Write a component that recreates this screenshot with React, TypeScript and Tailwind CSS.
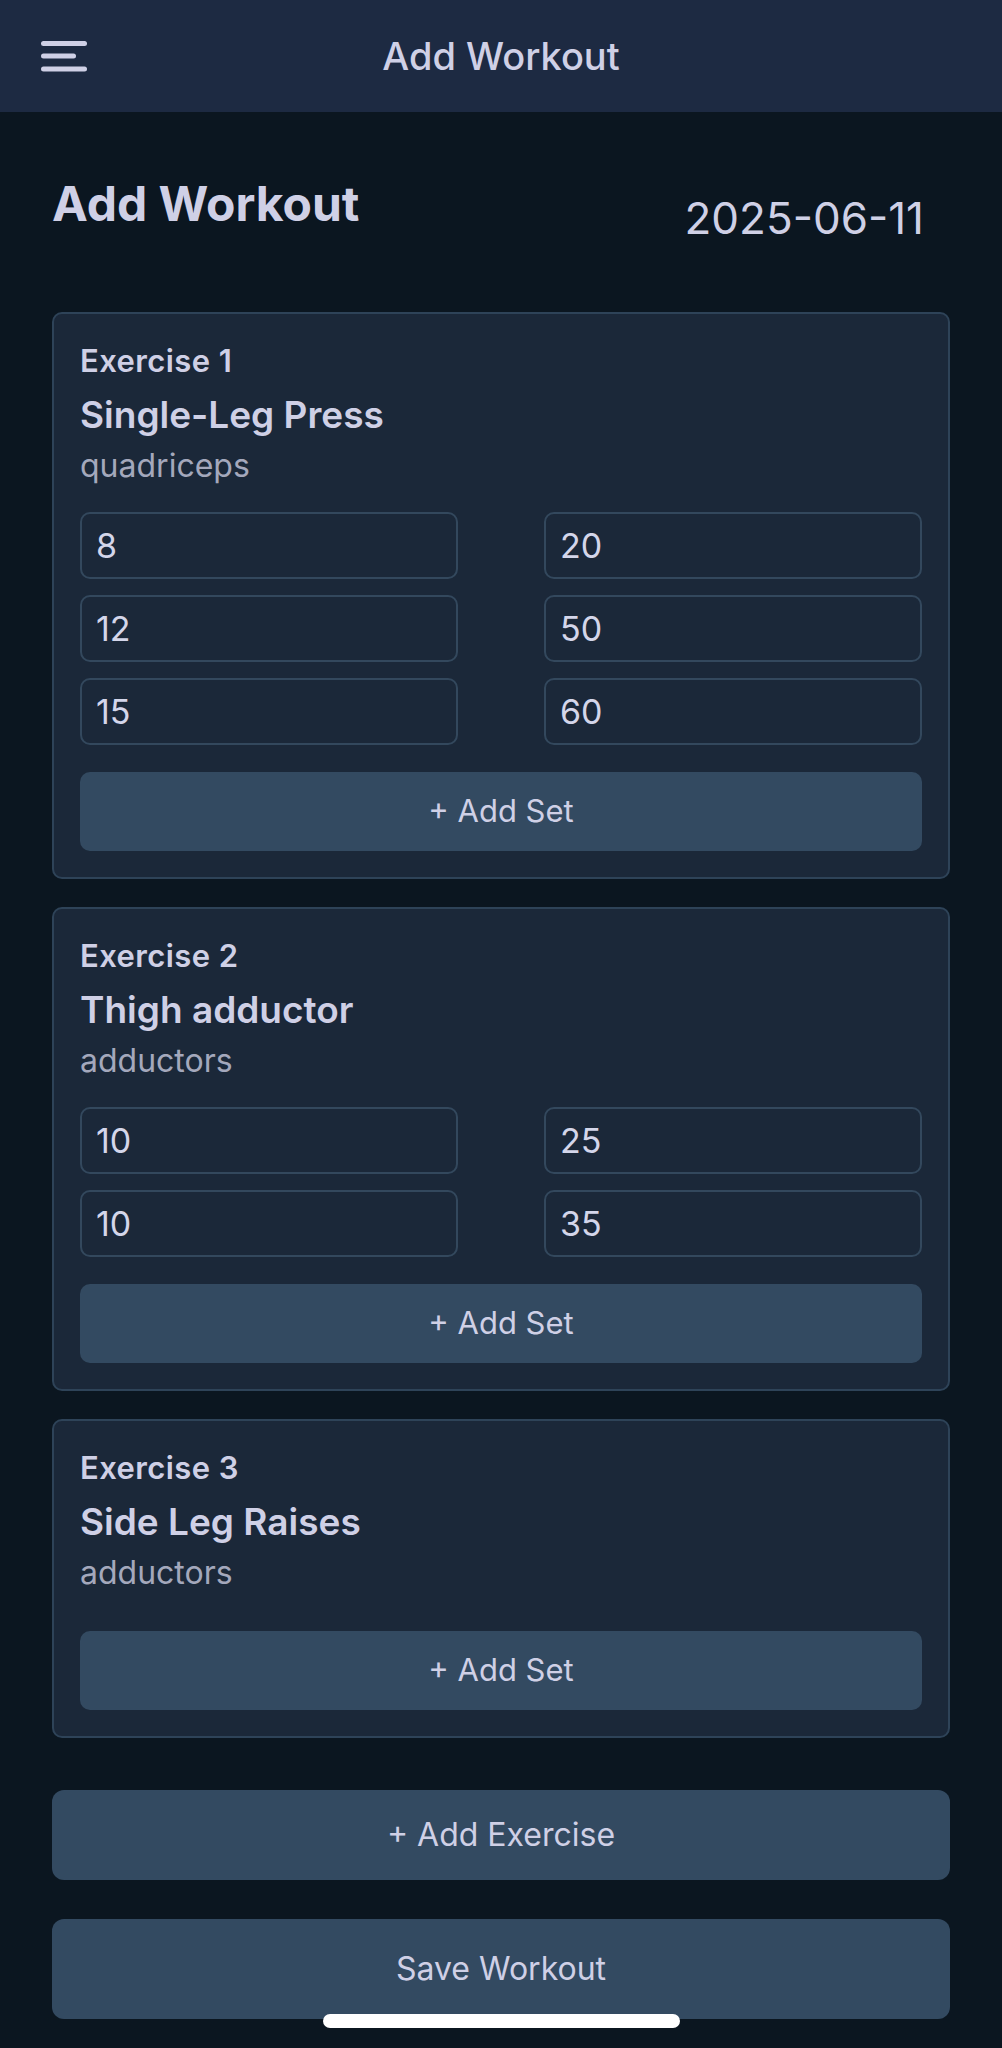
import React from 'react'

type Exercise = {
  name: string
  muscle: string
  sets: [string, string][]
}

const EXERCISES: Exercise[] = [
  { name: 'Single-Leg Press', muscle: 'quadriceps', sets: [['8', '20'], ['12', '50'], ['15', '60']] },
  { name: 'Thigh adductor', muscle: 'adductors', sets: [['10', '25'], ['10', '35']] },
  { name: 'Side Leg Raises', muscle: 'adductors', sets: [] },
]

function MenuIcon() {
  return (
    <svg width="48" height="32" viewBox="0 0 48 32" className="text-[#cfd0e6]">
      <line x1="3.5" y1="3.5" x2="44.5" y2="3.5" stroke="currentColor" strokeWidth="5" strokeLinecap="round" />
      <line x1="3.5" y1="16" x2="33.5" y2="16" stroke="currentColor" strokeWidth="5" strokeLinecap="round" />
      <line x1="3.5" y1="29" x2="44.5" y2="29" stroke="currentColor" strokeWidth="5" strokeLinecap="round" />
    </svg>
  )
}

function ExerciseCard({ index, exercise }: { index: number; exercise: Exercise }) {
  const hasSets = exercise.sets.length > 0

  return (
    <section className="rounded-[10px] border-2 border-[#2e4358] bg-[#1b2839] px-[26px] pt-[31px] pb-[26px]">
      <h3 className="text-[31px] leading-none font-semibold tracking-[0.4px]">Exercise {index + 1}</h3>
      <h2 className="mt-[20px] text-[37px] leading-none font-semibold">{exercise.name}</h2>
      <p className="mt-[17px] text-[32px] leading-none text-[#a4a8bc]">{exercise.muscle}</p>

      {hasSets && (
        <div className="mt-[30px] grid grid-cols-2 gap-x-[86px] gap-y-4">
          {exercise.sets.flatMap(([reps, weight], i) => [
            <input
              key={`r${i}`}
              readOnly
              defaultValue={reps}
              className="h-[67px] w-full rounded-[10px] border-2 border-[#33485d] bg-[#1b2839] px-[14px] text-[34px] text-[#d4d6ea] outline-none"
            />,
            <input
              key={`w${i}`}
              readOnly
              defaultValue={weight}
              className="h-[67px] w-full rounded-[10px] border-2 border-[#33485d] bg-[#1b2839] px-[14px] text-[34px] text-[#d4d6ea] outline-none"
            />,
          ])}
        </div>
      )}

      <button
        className={
          hasSets
            ? 'mt-[27px] flex h-[79px] w-full items-center justify-center rounded-[10px] bg-[#334a61] text-[31px]'
            : 'mt-[42px] flex h-[79px] w-full items-center justify-center rounded-[10px] bg-[#334a61] text-[31px]'
        }
      >
        + Add Set
      </button>
    </section>
  )
}

export default function App() {
  return (
    <div className="relative min-h-[2048px] bg-[#0b1620] font-['Inter','Noto_Sans',sans-serif] text-[#cfd0e6]">
      <header className="relative flex h-[112px] items-center bg-[#1d2a42] px-[40px]">
        <MenuIcon />
        <h1 className="pointer-events-none absolute inset-x-0 text-center text-[38px] leading-none font-medium">
          Add Workout
        </h1>
      </header>

      <main className="px-[52px] pt-[68px]">
        <div className="flex items-start justify-between">
          <h1 className="text-[48px] leading-none font-bold">Add Workout</h1>
          <div className="mt-[16px] mr-[26px] text-[44px] leading-none">2025-06-11</div>
        </div>

        <div className="mt-[72px] flex flex-col gap-[28px]">
          {EXERCISES.map((exercise, i) => (
            <ExerciseCard key={exercise.name} index={i} exercise={exercise} />
          ))}
        </div>

        <button className="mt-[52px] flex h-[90px] w-full items-center justify-center rounded-[12px] bg-[#334a61] text-[32px]">
          + Add Exercise
        </button>
        <button className="mt-[39px] flex h-[100px] w-full items-center justify-center rounded-[12px] bg-[#334a61] text-[32px]">
          Save Workout
        </button>
      </main>

      <div className="absolute left-[323px] top-[2014px] h-[14px] w-[357px] rounded-full bg-white" />
    </div>
  )
}
